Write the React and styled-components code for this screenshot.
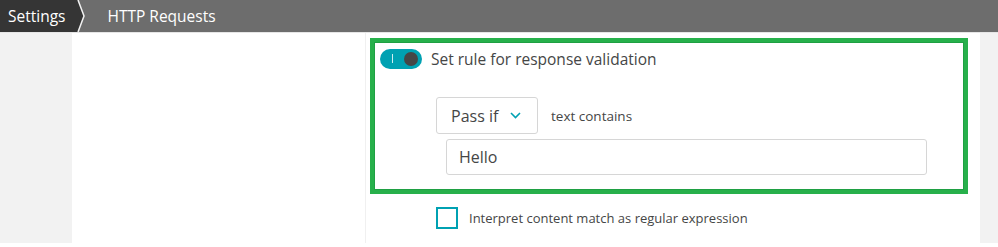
import React from "react";
import styled, { createGlobalStyle } from "styled-components";

const GlobalStyle = createGlobalStyle`
  html, body {
    margin: 0;
    padding: 0;
    background: #ffffff;
    font-family: "Open Sans", "Noto Sans", sans-serif;
    color: #454646;
  }
`;

const Page = styled.div`
  width: 998px;
  height: 247px;
  overflow: hidden;
  background: #fff;
`;

const Header = styled.div`
  box-sizing: border-box;
  height: 33px;
  display: flex;
  align-items: stretch;
  background: #6d6d6d;
  border-bottom: 1px solid #e6e6e6;
`;

const Crumb = styled.div`
  display: flex;
  align-items: center;
  padding: ${(p) => (p.$first ? "0 10px 0 8px" : "0 0 0 20px")};
  background: ${(p) => (p.$first ? "#353535" : "transparent")};
  color: #fff;
  font-size: 15.5px;
  white-space: nowrap;
`;

const Chevron = styled.svg`
  display: block;
  width: 12px;
  height: 32px;
  flex: none;
`;

const Body = styled.div`
  height: 210px;
  display: grid;
  grid-template-columns: 72px 293px 1px 614px 18px;
`;

const Side = styled.div`
  background: #f2f2f2;
`;

const Blank = styled.div`
  background: #fff;
`;

const Divider = styled.div`
  background: #f0f0f0;
`;

const Column = styled.div`
  padding: 5px 12px 0 4px;
  display: flex;
  flex-direction: column;
`;

const Highlight = styled.div`
  box-sizing: border-box;
  border: 4px solid #27b04b;
  box-shadow: inset 0 0 0 1px #1fa043;
  height: 156px;
  padding: 6px 0 0 6px;
  display: flex;
  flex-direction: column;
`;

const ToggleRow = styled.div`
  display: flex;
  align-items: center;
  gap: 9px;
  font-size: 15.5px;
`;

const Toggle = styled.div`
  position: relative;
  width: 42px;
  height: 20px;
  border-radius: 10px;
  background: #00a1b2;
  flex: none;

  &::before {
    content: "";
    position: absolute;
    left: 12px;
    top: 5px;
    width: 1px;
    height: 9px;
    background: #cfeef2;
  }

  &::after {
    content: "";
    position: absolute;
    right: 4px;
    top: 3px;
    width: 14px;
    height: 14px;
    border-radius: 50%;
    background: #454646;
  }
`;

const RuleBlock = styled.div`
  margin: 27px 0 0 56px;
  display: flex;
  flex-direction: column;
  gap: 5px;
`;

const ConditionRow = styled.div`
  display: flex;
  align-items: center;
  gap: 13px;
  font-size: 13.5px;
`;

const Select = styled.div`
  box-sizing: border-box;
  width: 102px;
  height: 37px;
  border: 1px solid #d6d6d6;
  border-radius: 3px;
  display: flex;
  align-items: center;
  justify-content: space-between;
  padding: 0 16px 0 14px;
  font-size: 16px;
`;

const TextInput = styled.div`
  box-sizing: border-box;
  margin-left: 10px;
  width: 481px;
  height: 36px;
  border: 1px solid #d6d6d6;
  border-radius: 3px;
  display: flex;
  align-items: center;
  padding-left: 12px;
  font-size: 16px;
`;

const CheckRow = styled.label`
  margin: 13px 0 0 66px;
  display: flex;
  align-items: center;
  gap: 11px;
  font-size: 13px;
`;

const Checkbox = styled.span`
  box-sizing: border-box;
  width: 22px;
  height: 22px;
  border: 2px solid #00a1b2;
  background: #fff;
  flex: none;
`;

export default function App() {
  return (
    <Page>
      <GlobalStyle />
      <Header>
        <Crumb $first>Settings</Crumb>
        <Chevron viewBox="0 0 12 32">
          <polygon points="0,0 3,0 9,16 3,32 0,32" fill="#353535" />
          <polyline points="3,0 9,16 3,32" fill="none" stroke="#f2f2f2" strokeWidth="1.5" />
        </Chevron>
        <Crumb>HTTP Requests</Crumb>
      </Header>
      <Body>
        <Side />
        <Blank />
        <Divider />
        <Column>
          <Highlight>
            <ToggleRow>
              <Toggle />
              Set rule for response validation
            </ToggleRow>
            <RuleBlock>
              <ConditionRow>
                <Select>
                  Pass if
                  <svg width="11" height="7" viewBox="0 0 11 7">
                    <polyline points="1,1 5.5,5.5 10,1" fill="none" stroke="#00a1b2" strokeWidth="1.6" />
                  </svg>
                </Select>
                text contains
              </ConditionRow>
              <TextInput>Hello</TextInput>
            </RuleBlock>
          </Highlight>
          <CheckRow>
            <Checkbox />
            Interpret content match as regular expression
          </CheckRow>
        </Column>
        <Side />
      </Body>
    </Page>
  );
}
